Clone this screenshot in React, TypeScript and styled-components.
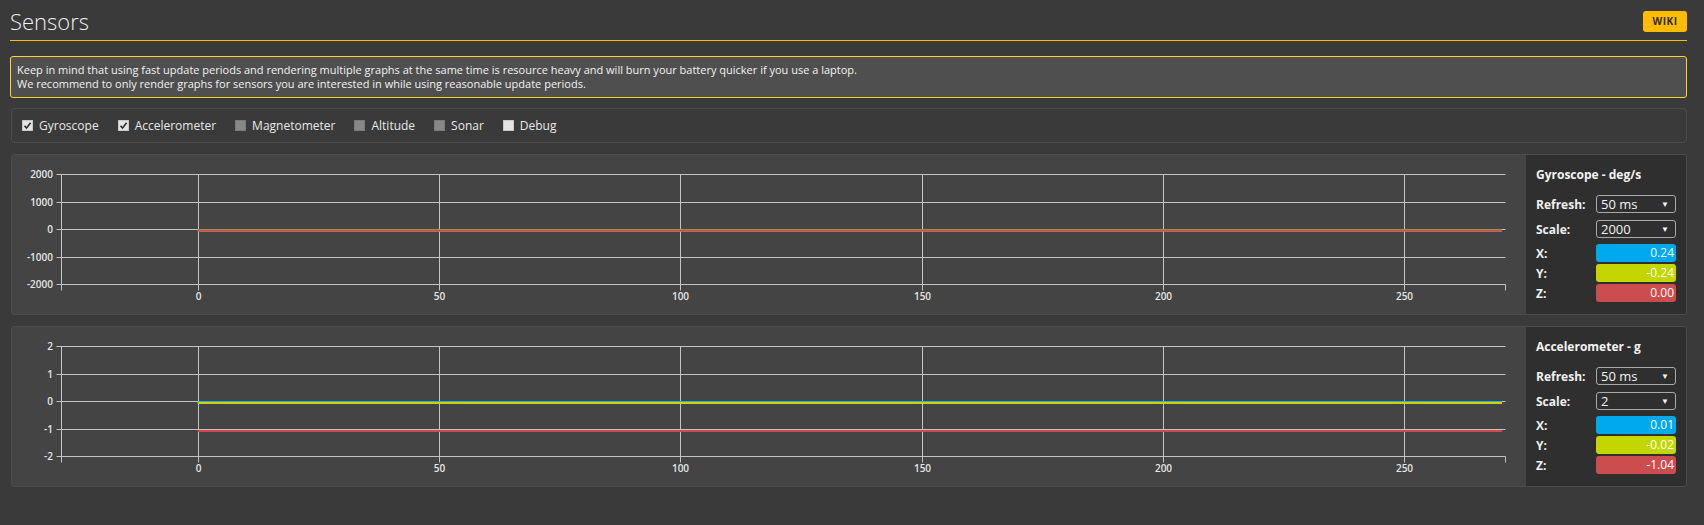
import React from 'react';
import styled, { createGlobalStyle } from 'styled-components';

const colors = {
    page: '#393a39',
    panel: '#434443',
    side: '#2e2f2e',
    border: '#4b4c4b',
    accent: '#ffbb00',
    noteBorder: '#ffd52b',
    note: '#4f4f4f',
    text: '#e8e8e8',
    grid: '#c4c4c4',
    x: '#00a9ee',
    y: '#c3d600',
    z: '#cc4d4d',
};

const GlobalStyle = createGlobalStyle`
    html, body {
        margin: 0;
        padding: 0;
        background: ${colors.page};
    }
    body {
        font-family: 'Open Sans', 'Liberation Sans', sans-serif;
        color: ${colors.text};
    }
`;

// #region ====== style ===
const Page = styled.div`
    padding: 0 17px 20px 10px;
`;

const Header = styled.div`
    display: flex;
    align-items: center;
    justify-content: space-between;
    height: 38px;
    padding-top: 2px;
    border-bottom: 1px solid ${colors.accent};
`;

const Title = styled.h1`
    margin: 0;
    font-size: 22px;
    font-weight: 300;
    color: #f0f0f0;
`;

const WikiButton = styled.a`
    display: flex;
    align-items: center;
    justify-content: center;
    width: 44px;
    height: 21px;
    border-radius: 3px;
    background: ${colors.accent};
    color: #2d2d2d;
    font-size: 10px;
    font-weight: 700;
    letter-spacing: 0.5px;
`;

const Note = styled.div`
    margin-top: 15px;
    padding: 6px 6px;
    background: ${colors.note};
    border: 1px solid ${colors.noteBorder};
    border-radius: 3px;
    font-size: 11px;
    line-height: 14px;
    color: #f2f2f2;
`;

const CheckBar = styled.div`
    display: flex;
    align-items: center;
    gap: 19px;
    height: 33px;
    margin: 10px 0 0 1px;
    padding: 0 10px;
    border: 1px solid ${colors.border};
    border-radius: 4px;
`;

const CheckItem = styled.label`
    display: flex;
    align-items: center;
    gap: 6px;
    font-size: 12px;
`;

const Box = styled.span<{ $tone: 'on' | 'off' | 'disabled' }>`
    display: flex;
    align-items: center;
    justify-content: center;
    width: 11px;
    height: 11px;
    border-radius: 1px;
    background: ${p => (p.$tone === 'disabled' ? '#878787' : '#e4e4e4')};
    box-shadow: inset 0 0 0 1px ${p => (p.$tone === 'disabled' ? '#7a7a7a' : '#c8c8c8')};
`;

const Panel = styled.div`
    display: flex;
    height: 159px;
    margin: 11px 0 0 1px;
    background: ${colors.panel};
    border: 1px solid ${colors.border};
    border-radius: 3px;
    overflow: hidden;
`;

const GraphArea = styled.div`
    flex: 1;
`;

const Side = styled.div`
    display: flex;
    flex-direction: column;
    width: 140px;
    padding: 12px 10px 0;
    background: ${colors.side};
`;

const SideTitle = styled.div`
    font-size: 12px;
    font-weight: 700;
    line-height: 16px;
    color: #f4f4f4;
    margin-bottom: 12px;
`;

const Row = styled.div<{ $gap?: number }>`
    display: grid;
    grid-template-columns: 60px 80px;
    align-items: center;
    margin-bottom: ${p => p.$gap ?? 2}px;
`;

const Label = styled.span`
    font-size: 12px;
    font-weight: 700;
    color: #f0f0f0;
`;

const Select = styled.div`
    position: relative;
    height: 16px;
    padding-left: 4px;
    border: 1px solid #aaa;
    border-radius: 3px;
    font-size: 13px;
    line-height: 16px;
    color: #f4f4f4;

    &::after {
        content: '▼';
        position: absolute;
        right: 6px;
        top: 0;
        font-size: 8px;
    }
`;

const Value = styled.div<{ $bg: string }>`
    height: 18px;
    padding-right: 2px;
    border-radius: 3px;
    background: ${p => p.$bg};
    font-size: 12px;
    line-height: 18px;
    text-align: right;
    color: #fff;
`;
// #endregion === style ===

const Check = () => (
    <svg width="9" height="9" viewBox="0 0 9 9">
        <path d="M1.5 4.8 L3.6 7 L7.6 1.8" fill="none" stroke="#333" strokeWidth="1.7" />
    </svg>
);

type Series = { color: string; value: number };

type ChartProps = {
    max: number;
    series: Series[];
};

const W = 1514;
const H = 159;
const LEFT = 49.5;
const RIGHT = 1493.5;
const ZERO_X = 185.7;
const PER_UNIT = 4.826;
const GRID_Y = [19.5, 47.5, 74.5, 102.5, 129.5];
const X_TICKS = [0, 50, 100, 150, 200, 250];

const Chart: React.FC<ChartProps> = ({ max, series }) => {
    const yLabels = [max, max / 2, 0, -max / 2, -max];
    const toY = (v: number) => 74.5 - (v / max) * 55;
    const toX = (t: number) => Math.round(ZERO_X + t * PER_UNIT) + 0.5;

    return (
        <svg width={W} height={H} style={{ display: 'block' }}>
            <g stroke={colors.grid} strokeWidth="1" fill="none">
                {GRID_Y.map(y => (
                    <line key={y} x1={LEFT - 5} x2={RIGHT} y1={y} y2={y} />
                ))}
                <line x1={LEFT} x2={LEFT} y1={GRID_Y[0]} y2={GRID_Y[4] + 6} />
                <line x1={RIGHT} x2={RIGHT} y1={GRID_Y[4]} y2={GRID_Y[4] + 6} />
                {X_TICKS.map(t => (
                    <line key={t} x1={toX(t)} x2={toX(t)} y1={GRID_Y[0]} y2={GRID_Y[4] + 6} />
                ))}
            </g>
            <g fill="#e6e6e6" fontSize="10" fontWeight="600" fontFamily="'Open Sans', sans-serif">
                {yLabels.map((l, i) => (
                    <text key={i} x={41} y={GRID_Y[i] + 3.5} textAnchor="end">
                        {l}
                    </text>
                ))}
                {X_TICKS.map(t => (
                    <text key={t} x={toX(t)} y={145} textAnchor="middle">
                        {t}
                    </text>
                ))}
            </g>
            {series.map((s, i) => (
                <line
                    key={i}
                    x1={ZERO_X}
                    x2={1490}
                    y1={toY(s.value) + 1}
                    y2={toY(s.value) + 1}
                    stroke={s.color}
                    strokeWidth="2"
                />
            ))}
        </svg>
    );
};

type SensorPanelProps = {
    title: string;
    scale: string;
    max: number;
    values: [number, number, number];
};

const SensorPanel: React.FC<SensorPanelProps> = ({ title, scale, max, values }) => {
    const [x, y, z] = values;
    return (
        <Panel>
            <GraphArea>
                <Chart
                    max={max}
                    series={[
                        { color: colors.x, value: x },
                        { color: colors.y, value: y },
                        { color: '#d3474f', value: z },
                    ]}
                />
            </GraphArea>
            <Side>
                <SideTitle>{title}</SideTitle>
                <Row $gap={7}>
                    <Label>Refresh:</Label>
                    <Select>50 ms</Select>
                </Row>
                <Row $gap={6}>
                    <Label>Scale:</Label>
                    <Select>{scale}</Select>
                </Row>
                <Row>
                    <Label>X:</Label>
                    <Value $bg={colors.x}>{x.toFixed(2)}</Value>
                </Row>
                <Row>
                    <Label>Y:</Label>
                    <Value $bg={colors.y}>{y.toFixed(2)}</Value>
                </Row>
                <Row>
                    <Label>Z:</Label>
                    <Value $bg={colors.z}>{z.toFixed(2)}</Value>
                </Row>
            </Side>
        </Panel>
    );
};

const sensors: { name: string; tone: 'on' | 'off' | 'disabled' }[] = [
    { name: 'Gyroscope', tone: 'on' },
    { name: 'Accelerometer', tone: 'on' },
    { name: 'Magnetometer', tone: 'disabled' },
    { name: 'Altitude', tone: 'disabled' },
    { name: 'Sonar', tone: 'disabled' },
    { name: 'Debug', tone: 'off' },
];

export default function App() {
    return (
        <>
            <GlobalStyle />
            <Page>
                <Header>
                    <Title>Sensors</Title>
                    <WikiButton>WIKI</WikiButton>
                </Header>
                <Note>
                    Keep in mind that using fast update periods and rendering multiple graphs at the same time is
                    resource heavy and will burn your battery quicker if you use a laptop.
                    <br />
                    We recommend to only render graphs for sensors you are interested in while using reasonable
                    update periods.
                </Note>
                <CheckBar>
                    {sensors.map(s => (
                        <CheckItem key={s.name}>
                            <Box $tone={s.tone}>{s.tone === 'on' && <Check />}</Box>
                            {s.name}
                        </CheckItem>
                    ))}
                </CheckBar>
                <SensorPanel title="Gyroscope - deg/s" scale="2000" max={2000} values={[0.24, -0.24, 0]} />
                <SensorPanel title="Accelerometer - g" scale="2" max={2} values={[0.01, -0.02, -1.04]} />
            </Page>
        </>
    );
}
